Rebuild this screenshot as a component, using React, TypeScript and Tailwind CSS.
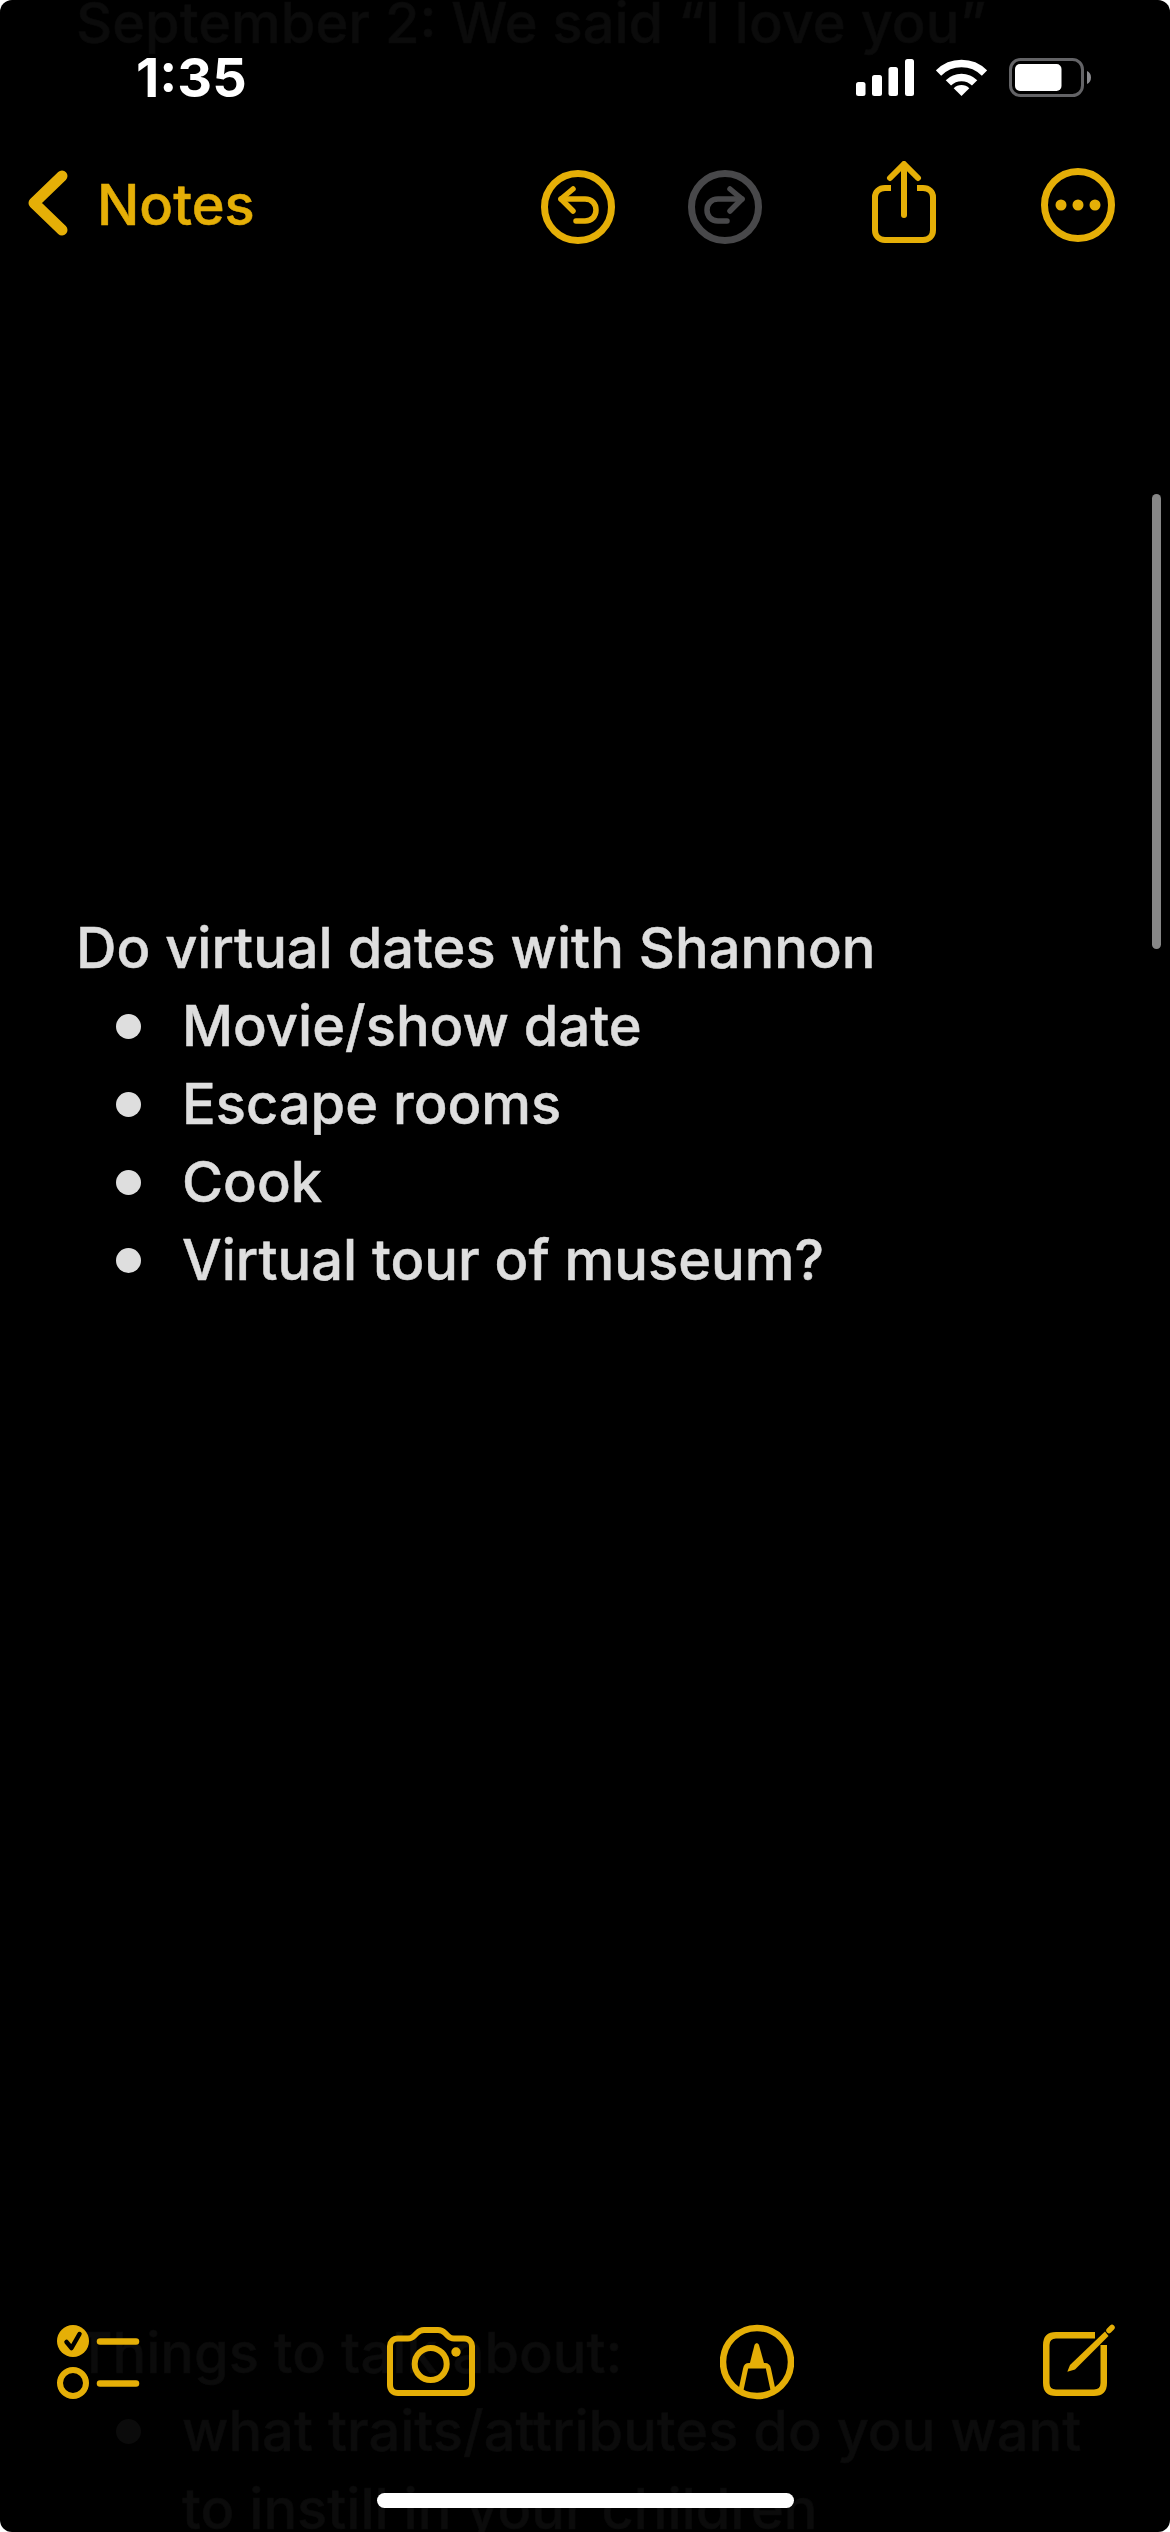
const noteText = "font-['Inter','Noto_Sans',sans-serif] text-[56px] leading-[78px] font-medium [-webkit-text-stroke:0.5px]";

function SignalIcon() {
  return (
    <svg width="58" height="37" viewBox="0 0 58 37" fill="#fff">
      <rect x="0" y="23" width="9.5" height="14" rx="2.5" />
      <rect x="16" y="16" width="10" height="21" rx="2.5" />
      <rect x="32.5" y="8" width="9.5" height="29" rx="2.5" />
      <rect x="49" y="0" width="9" height="37" rx="2.5" />
    </svg>
  );
}

function WifiIcon() {
  return (
    <svg width="51" height="37" viewBox="0 0 51 37" fill="none" stroke="#fff" strokeWidth="7.5">
      <path d="M2.5 14 A32.5 32.5 0 0 1 48.5 14" />
      <path d="M12.4 23.9 A18.5 18.5 0 0 1 38.6 23.9" />
      <path d="M25.5 37 L17.7 29.2 A11 11 0 0 1 33.3 29.2 Z" fill="#fff" stroke="none" />
    </svg>
  );
}

function BatteryIcon() {
  return (
    <svg width="82" height="39" viewBox="0 0 82 39">
      <rect x="1.5" y="1.5" width="72" height="36" rx="10" fill="none" stroke="#636366" strokeWidth="3" />
      <rect x="6" y="6" width="46.5" height="27" rx="5" fill="#fff" />
      <path d="M78 13 C80.5 14 82 16.5 82 19.5 C82 22.5 80.5 25 78 26 Z" fill="#8a8a8e" />
    </svg>
  );
}

function BackChevron() {
  return (
    <svg width="40" height="66" viewBox="0 0 40 66" fill="none" stroke="#e5af07" strokeWidth="11" strokeLinecap="round" strokeLinejoin="round">
      <path d="M34 6 L6 33 L34 60" />
    </svg>
  );
}

function UndoIcon({ color, flip }: { color: string; flip?: boolean }) {
  return (
    <svg width="74" height="84" viewBox="0 0 74 84" fill="none" stroke={color} strokeLinecap="round" strokeLinejoin="round">
      <circle cx="37" cy="46" r="33.5" strokeWidth="7" strokeLinecap="butt" />
      <g strokeWidth="5.5" transform={flip ? "matrix(-1 0 0 1 74 0)" : undefined}>
        <path d="M32 28 L20 38 L32 50" />
        <path d="M20 38 H44 C51 38 55 43 55 49 C55 55 51 60 44 60 H35" />
      </g>
    </svg>
  );
}

function ShareIcon() {
  return (
    <svg width="64" height="84" viewBox="0 0 64 84" fill="none" stroke="#e5af07" strokeLinecap="round" strokeLinejoin="round">
      <path d="M19 27 H13 C7 27 3 31 3 36 V69 C3 75 7 79 13 79 H51 C57 79 61 75 61 69 V36 C61 31 57 27 51 27 H45" strokeWidth="6" strokeLinecap="butt" />
      <path d="M32 54 V4" strokeWidth="6" />
      <path d="M18 17 L32 3 L46 17" strokeWidth="6" />
    </svg>
  );
}

function MoreIcon() {
  return (
    <svg width="74" height="84" viewBox="0 0 74 84" fill="none">
      <circle cx="37" cy="44" r="33.5" stroke="#e5af07" strokeWidth="7" />
      <circle cx="20" cy="44" r="5.5" fill="#e5af07" />
      <circle cx="37" cy="44" r="5.5" fill="#e5af07" />
      <circle cx="54" cy="44" r="5.5" fill="#e5af07" />
    </svg>
  );
}

function ChecklistIcon() {
  return (
    <svg width="84" height="76" viewBox="0 0 84 76" fill="none">
      <circle cx="17" cy="17" r="16" fill="#e5af07" />
      <path d="M10.5 18 L15.5 24 L23.5 10" stroke="#000" strokeWidth="4.5" strokeLinecap="round" strokeLinejoin="round" />
      <circle cx="17" cy="59" r="13" stroke="#e5af07" strokeWidth="6" />
      <path d="M44 17.5 H80" stroke="#e5af07" strokeWidth="6.5" strokeLinecap="round" />
      <path d="M44 59.5 H80" stroke="#e5af07" strokeWidth="6.5" strokeLinecap="round" />
    </svg>
  );
}

function CameraIcon() {
  return (
    <svg width="88" height="76" viewBox="0 0 88 76" fill="none" stroke="#e5af07" strokeWidth="6">
      <path d="M11 14.5 H21 C24 14.5 25.5 13.5 27 12 L30 9 C32 7 34 6 37 6 H51 C54 6 56 7 58 9 L61 12 C62.5 13.5 64 14.5 67 14.5 H77 C82 14.5 85 18 85 22 V61 C85 66 82 69 77 69 H11 C6 69 3 66 3 61 V22 C3 18 6 14.5 11 14.5 Z" strokeLinejoin="round" />
      <circle cx="43.7" cy="40" r="16" />
      <circle cx="69" cy="28" r="4.7" fill="#e5af07" stroke="none" />
    </svg>
  );
}

function MarkupIcon() {
  return (
    <svg width="74" height="76" viewBox="0 0 74 76" fill="none">
      <circle cx="37" cy="38" r="34" stroke="#e5af07" strokeWidth="6.5" />
      <path d="M34.5 21 C35.5 18.5 38 18.5 39 21 L45.5 44.5 H28.5 Z" fill="#e5af07" />
      <path d="M21 66 L25.5 45 C26 42.5 27 41.5 29 41.5 H45 C47 41.5 48 42.5 48.5 45 L53 66" stroke="#e5af07" strokeWidth="5" strokeLinejoin="round" />
    </svg>
  );
}

function ComposeIcon() {
  return (
    <svg width="72" height="76" viewBox="0 0 72 76" fill="none">
      <path d="M52 11.25 H13 Q3.25 11.25 3.25 21 V59 Q3.25 68.75 13 68.75 H51 Q60.75 68.75 60.75 59 V21" stroke="#e5af07" strokeWidth="6.5" />
      <path d="M24.3 47.7 L27 41 L62 7.5 L65.5 12 L32 45.5 Z" fill="#e5af07" />
      <path d="M66 6.5 L69 3.5" stroke="#e5af07" strokeWidth="5.5" strokeLinecap="round" />
    </svg>
  );
}

function Bullet({ children, dim }: { children: string; dim?: boolean }) {
  return (
    <li className="flex items-center">
      <span className={`ml-[40px] h-[25px] w-[25px] rounded-full ${dim ? "bg-[#0b0b0b]" : "bg-[#dedede]"}`} />
      <span className="ml-[41px]">{children}</span>
    </li>
  );
}

export default function App() {
  return (
    <div className="h-[2532px] w-[1170px] bg-white">
      <div className="relative h-full overflow-hidden rounded-[12px] bg-black">
        {/* Note body, the dim lines sit under the bars */}
        <div className={`pl-[76px] ${noteText}`}>
          <p className="-mt-[16px] whitespace-nowrap text-[#0b0b0b]">September 2: We said “I love you”</p>

          <div className="mt-[847px] text-[#dedede]">
            <p>Do virtual dates with Shannon</p>
            <ul>
              <Bullet>Movie/show date</Bullet>
              <Bullet>Escape rooms</Bullet>
              <Bullet>Cook</Bullet>
              <Bullet>Virtual tour of museum?</Bullet>
            </ul>
          </div>

          <div className="mt-[1015px] text-[#0b0b0b]">
            <p>Things to talk about:</p>
            <ul>
              <Bullet dim>what traits/attributes do you want</Bullet>
            </ul>
            <p className="pl-[106px]">to instill in your children</p>
          </div>
        </div>

        {/* Scroll indicator */}
        <div className="absolute right-[9px] top-[494px] h-[455px] w-[9px] rounded-full bg-[#868686]" />

        {/* Status bar and nav */}
        <header className="absolute inset-x-0 top-0 pt-[58px]">
          <div className="flex h-[39px] items-center justify-between pl-[136px] pr-[79px]">
            <span className="font-['Inter',sans-serif] text-[54px] leading-[39px] font-bold text-white">1:35</span>
            <div className="flex items-center gap-[22px]">
              <SignalIcon />
              <WifiIcon />
              <BatteryIcon />
            </div>
          </div>
          <nav className="mt-[64px] flex h-[84px] items-center pl-[28px] pr-[55px]">
            <BackChevron />
            <span className="ml-[29px] pt-[4px] font-['Inter',sans-serif] text-[56px] leading-[84px] font-medium text-[#e5af07] [-webkit-text-stroke:0.5px]">Notes</span>
            <div className="ml-auto flex items-center">
              <UndoIcon color="#e5af07" />
              <div className="ml-[73px]">
                <UndoIcon color="#48484a" flip />
              </div>
              <div className="ml-[110px]">
                <ShareIcon />
              </div>
              <div className="ml-[105px]">
                <MoreIcon />
              </div>
            </div>
          </nav>
        </header>

        {/* Bottom toolbar */}
        <footer className="absolute inset-x-0 bottom-0 pb-[24px]">
          <div className="flex h-[76px] items-center pl-[56px]">
            <ChecklistIcon />
            <div className="ml-[247px]">
              <CameraIcon />
            </div>
            <div className="ml-[245px]">
              <MarkupIcon />
            </div>
            <div className="ml-[249px]">
              <ComposeIcon />
            </div>
          </div>
          <div className="mx-auto mt-[93px] h-[15px] w-[417px] rounded-full bg-white" />
        </footer>
      </div>
    </div>
  );
}
